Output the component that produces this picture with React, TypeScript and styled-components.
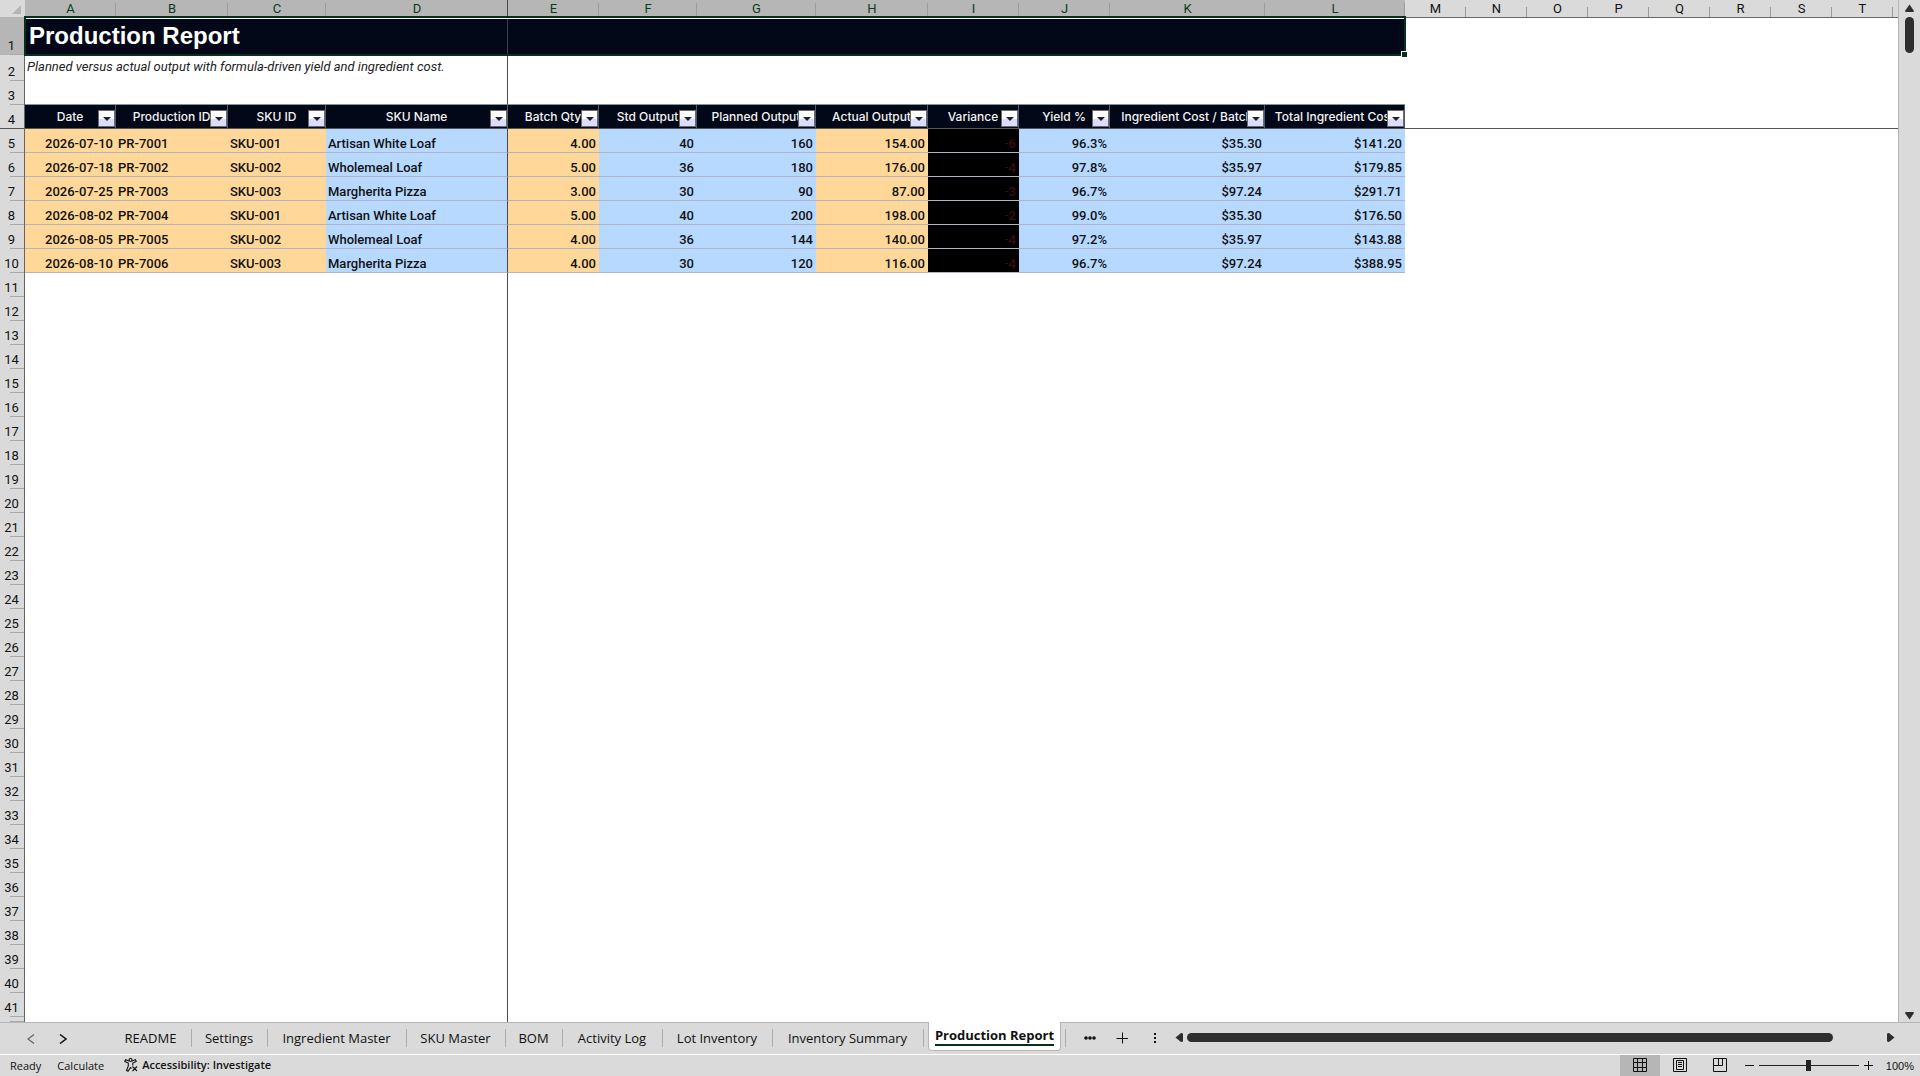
import React from "react";
import styled, { createGlobalStyle, css } from "styled-components";

const sheetFont = '"Roboto", "Liberation Sans", sans-serif';
const uiFont = '"Open Sans", "Noto Sans", sans-serif';

const GlobalStyle = createGlobalStyle`
  *, *::before, *::after { box-sizing: border-box; }
  body { margin: 0; background: #dadada; color: #111; font-family: ${sheetFont}; }
  button, input { font: inherit; color: inherit; }
`;

const Page = styled.div`
  display: flex;
  flex-direction: column;
  height: 100vh;
  min-height: 400px;
  overflow: hidden;
`;

const Workspace = styled.main`
  display: flex;
  flex: 1;
  min-height: 0;
`;

const Viewport = styled.div`
  flex: 1;
  min-width: 0;
  overflow: hidden;
  background: #fff;
  border-right: 1px solid #b6b6b6;
`;

const Sheet = styled.table`
  width: 100%;
  height: 100%;
  table-layout: fixed;
  border-collapse: separate;
  border-spacing: 0;
  font-size: 13px;
  line-height: 16px;
`;

const Col = styled.col<{ $w?: number }>`
  width: ${(p) => (p.$w ? `${p.$w}px` : "auto")};
`;

const Row = styled.tr<{ $h?: number }>`
  height: ${(p) => (p.$h ? `${p.$h}px` : "auto")};
`;

const Corner = styled.th`
  padding: 0;
  background: #dadada;
  border-bottom: 1px solid #b6b6b6;
`;

const SelectAll = styled.button`
  display: flex;
  justify-content: flex-end;
  align-items: flex-end;
  width: 100%;
  height: 17px;
  padding: 0 4px 3px 0;
  border: 0;
  background: none;

  &::before {
    content: "";
    border-left: 9px solid transparent;
    border-bottom: 9px solid #b6b6b6;
  }
`;

const ColumnHead = styled.th<{ $selected: boolean; $freeze?: boolean }>`
  padding: 0;
  text-align: center;
  vertical-align: middle;
  font-weight: 400;
  color: ${(p) => (p.$selected ? "#0b3a1e" : "#111")};
  border-bottom: 1px solid ${(p) => (p.$selected ? "#b6b6b6" : "#666")};
  background:
    linear-gradient(${(p) => (p.$freeze ? "#4a4a4a, #4a4a4a" : "#9c9c9c, #9c9c9c")}) right bottom / 1px ${(p) =>
      p.$freeze ? "17px" : p.$selected ? "14px" : "10px"} no-repeat,
    ${(p) => (p.$selected ? "#b6b6b6" : "#dadada")};
`;

const ColumnHeadRest = styled.td`
  padding: 0;
  background: #dadada;
  border-bottom: 1px solid #666;
`;

const RowHead = styled.th<{ $selected?: boolean; $freeze?: boolean }>`
  padding: 0 1px 1px 0;
  text-align: center;
  vertical-align: bottom;
  font-weight: 400;
  border-right: 1px solid #666;
  background:
    linear-gradient(${(p) => (p.$freeze ? "#555, #555" : "#a8a8a8, #a8a8a8")}) right bottom / ${(p) =>
      p.$freeze ? "100%" : "14px"} 1px no-repeat,
    ${(p) => (p.$selected ? "#b6b6b6" : "#dadada")};
`;

type CellProps = {
  $fill?: string;
  $align?: "left" | "right" | "center";
  $freezeRight?: boolean;
  $freezeBottom?: boolean;
  $aboveFields?: boolean;
  $negative?: boolean;
};

const Cell = styled.td<CellProps>`
  padding: 0 3px 0 2px;
  text-align: ${(p) => p.$align ?? "left"};
  vertical-align: bottom;
  white-space: nowrap;
  font-weight: 500;
  color: ${(p) => (p.$negative ? "#3a0d10" : "#111")};
  background: ${(p) => p.$fill ?? "transparent"};
  ${(p) => p.$fill && css`border-bottom: 1px solid #b3b3c4;`}
  ${(p) => p.$freezeRight && css`border-right: 1px solid #4a4a4a;`}
  ${(p) => p.$freezeBottom && css`border-bottom: 1px solid #555;`}
  ${(p) => p.$aboveFields && css`border-bottom: 1px solid #7d9a94;`}
`;

const TitleCell = styled.td`
  position: relative;
  padding: 0 4px 2px;
  background: #020817;
  color: #fff;
  font-family: "Liberation Sans", Arial, sans-serif;
  font-size: 24px;
  line-height: 28px;
  font-weight: 700;
  vertical-align: middle;
  box-shadow: inset 0 0 0 1px #fff;
`;

const Selection = styled.span`
  position: absolute;
  inset: -2px -1px -1px -1px;
  border: 2px solid #06301a;
  pointer-events: none;

  &::after {
    content: "";
    position: absolute;
    right: -4px;
    bottom: -4px;
    width: 7px;
    height: 7px;
    background: #06301a;
    border: 1px solid #fff;
  }
`;

const FreezeOverTitle = styled.span`
  position: absolute;
  top: 1px;
  bottom: 1px;
  left: 482px;
  width: 1px;
  background: #3c424d;
`;

const NoteCell = styled(Cell)`
  padding-bottom: 2px;
  font-style: italic;
  font-weight: 400;
  color: #222;
  vertical-align: middle;
`;

const FieldHead = styled.th<{ $freezeRight?: boolean }>`
  position: relative;
  padding: 0;
  overflow: hidden;
  white-space: nowrap;
  background: #020817;
  color: #f4f4f4;
  font-family: "Inter", sans-serif;
  font-size: 12px;
  font-weight: 500;
  border-bottom: 1px solid #555;
  border-right: 1px solid ${(p) => (p.$freezeRight ? "#5f5f5f" : "#4d5c6c")};
`;

const FieldName = styled.span`
  display: flex;
  justify-content: center;
`;

const FilterButton = styled.button`
  position: absolute;
  right: 0;
  bottom: 1px;
  display: grid;
  place-items: center;
  width: 17px;
  height: 17px;
  padding: 0;
  border: 1px solid #6b6b6b;
  background: linear-gradient(#fff 50%, #dcdcff 50%);

  &::before {
    content: "";
    border: 4px solid transparent;
    border-top-color: #222;
    border-bottom: 0;
  }
`;

const VerticalScroll = styled.div`
  display: flex;
  flex-direction: column;
  align-items: center;
  justify-content: space-between;
  width: 21px;
  padding: 4px 0 2px;
`;

const ScrollGroup = styled.div`
  display: flex;
  flex-direction: column;
  align-items: center;
  gap: 5px;
`;

const Thumb = styled.div<{ $vertical?: boolean }>`
  ${(p) => (p.$vertical ? "width: 9px; height: 36px;" : "flex: 1; height: 9px;")}
  border-radius: 5px;
  background: #2e2e2e;
`;

const IconButton = styled.button`
  display: grid;
  place-items: center;
  padding: 0;
  border: 0;
  background: none;
`;

const Arrow = styled.svg`
  display: block;
  fill: #2e2e2e;
`;

const TabBar = styled.nav`
  display: flex;
  align-items: stretch;
  height: 32px;
  border-top: 1px solid #b6b6b6;
  font-family: ${uiFont};
  font-size: 13px;
  line-height: 18px;
`;

const Stepper = styled.div`
  display: flex;
  align-items: center;
  gap: 24px;
  width: 111px;
  padding-left: 27px;
`;

const Tab = styled.button<{ $w: number }>`
  width: ${(p) => p.$w}px;
  padding: 0 2px 2px 0;
  border: 0;
  background: linear-gradient(#adadad, #adadad) right 6px / 1px 18px no-repeat;
  white-space: nowrap;
`;

const ActiveTab = styled.button`
  width: 133px;
  height: 29px;
  margin: -1px 0 0 4px;
  padding: 0;
  border: 1px solid #b6b6b6;
  border-top: 0;
  border-radius: 0 0 4px 4px;
  background: #fff;
  font-weight: 700;
  white-space: nowrap;
`;

const Underlined = styled.span`
  display: inline-block;
  border-bottom: 2px solid #06301a;
`;

const TabTools = styled.div`
  display: flex;
  align-items: center;
  gap: 20px;
  padding: 0 13px 2px 23px;
  background: linear-gradient(#adadad, #adadad) 4px 6px / 1px 18px no-repeat;
`;

const HorizontalScroll = styled.div`
  display: flex;
  flex: 1;
  align-items: center;
  gap: 4px;
  padding: 0 25px 2px 0;
`;

const TrackEnd = styled.div`
  width: 46px;
`;

const StatusBar = styled.footer`
  display: flex;
  align-items: stretch;
  height: 22px;
  border-top: 1px solid #fff;
  font-family: ${uiFont};
  font-size: 11px;
  line-height: 16px;
`;

const StatusItems = styled.div`
  display: flex;
  flex: 1;
  align-items: center;
  gap: 16px;
  padding-left: 10px;
`;

const Accessibility = styled.button`
  display: flex;
  align-items: center;
  gap: 4px;
  margin-left: 4px;
  padding: 0 0 2px;
  border: 0;
  background: none;
  font-weight: 600;
`;

const ViewButton = styled(IconButton)<{ $on?: boolean }>`
  width: 40px;
  padding-bottom: 2px;
  background: ${(p) => (p.$on ? "#b6b6b6" : "transparent")};
`;

const ZoomBox = styled.div`
  display: flex;
  align-items: center;
  gap: 5px;
  padding: 0 6px 0 5px;
`;

const ZoomSlider = styled.input`
  appearance: none;
  width: 100px;
  height: 12px;
  margin: 0;
  background: linear-gradient(#222, #222) center / 100% 1px no-repeat;

  &::-webkit-slider-thumb {
    appearance: none;
    width: 5px;
    height: 11px;
    background: #222;
  }
`;

const ZoomValue = styled.button`
  margin-left: 8px;
  padding: 0;
  border: 0;
  background: none;
  font-family: "Liberation Sans", Arial, sans-serif;
  font-size: 11px;
`;

const ORANGE = "#ffd899";
const BLUE = "#b7d9ff";

type Field = { name: string; width: number; fill: string; align: "left" | "right" };

const fields: Field[] = [
  { name: "Date", width: 91, fill: ORANGE, align: "right" },
  { name: "Production ID", width: 112, fill: ORANGE, align: "left" },
  { name: "SKU ID", width: 98, fill: ORANGE, align: "left" },
  { name: "SKU Name", width: 182, fill: BLUE, align: "left" },
  { name: "Batch Qty", width: 91, fill: ORANGE, align: "right" },
  { name: "Std Output", width: 98, fill: BLUE, align: "right" },
  { name: "Planned Output", width: 119, fill: BLUE, align: "right" },
  { name: "Actual Output", width: 112, fill: ORANGE, align: "right" },
  { name: "Variance", width: 91, fill: "#000", align: "right" },
  { name: "Yield %", width: 91, fill: BLUE, align: "right" },
  { name: "Ingredient Cost / Batch", width: 155, fill: BLUE, align: "right" },
  { name: "Total Ingredient Cost", width: 140, fill: BLUE, align: "right" },
];

const records = [
  ["2026-07-10", "PR-7001", "SKU-001", "Artisan White Loaf", "4.00", "40", "160", "154.00", "-6", "96.3%", "$35.30", "$141.20"],
  ["2026-07-18", "PR-7002", "SKU-002", "Wholemeal Loaf", "5.00", "36", "180", "176.00", "-4", "97.8%", "$35.97", "$179.85"],
  ["2026-07-25", "PR-7003", "SKU-003", "Margherita Pizza", "3.00", "30", "90", "87.00", "-3", "96.7%", "$97.24", "$291.71"],
  ["2026-08-02", "PR-7004", "SKU-001", "Artisan White Loaf", "5.00", "40", "200", "198.00", "-2", "99.0%", "$35.30", "$176.50"],
  ["2026-08-05", "PR-7005", "SKU-002", "Wholemeal Loaf", "4.00", "36", "144", "140.00", "-4", "97.2%", "$35.97", "$143.88"],
  ["2026-08-10", "PR-7006", "SKU-003", "Margherita Pizza", "4.00", "30", "120", "116.00", "-4", "96.7%", "$97.24", "$388.95"],
];

const blankColumns = ["M", "N", "O", "P", "Q", "R", "S", "T"];
const letters = [..."ABCDEFGHIJKL", ...blankColumns];
const blankRows = Array.from({ length: 31 }, (_, i) => i + 11);
const FROZEN = 3;

const tabs = [
  { name: "README", width: 81 },
  { name: "Settings", width: 76 },
  { name: "Ingredient Master", width: 139 },
  { name: "SKU Master", width: 99 },
  { name: "BOM", width: 57 },
  { name: "Activity Log", width: 100 },
  { name: "Lot Inventory", width: 110 },
  { name: "Inventory Summary", width: 151 },
];

function BlankCells() {
  return (
    <>
      <Cell colSpan={4} $freezeRight />
      <Cell colSpan={17} />
    </>
  );
}

function Grid() {
  return (
    <Sheet>
      <colgroup>
        <Col $w={25} />
        {fields.map((f) => <Col key={f.name} $w={f.width} />)}
        {blankColumns.map((c) => <Col key={c} $w={61} />)}
        <Col />
      </colgroup>
      <thead>
        <Row $h={18}>
          <Corner><SelectAll aria-label="Select all" /></Corner>
          {letters.map((letter, i) => (
            <ColumnHead key={letter} scope="col" $selected={i < fields.length} $freeze={i === FROZEN}>
              {letter}
            </ColumnHead>
          ))}
          <ColumnHeadRest />
        </Row>
      </thead>
      <tbody>
        <Row $h={37}>
          <RowHead scope="row" $selected>1</RowHead>
          <TitleCell colSpan={12}>
            Production Report
            <FreezeOverTitle />
            <Selection />
          </TitleCell>
          <Cell colSpan={9} />
        </Row>
        <Row $h={26}>
          <RowHead scope="row">2</RowHead>
          <NoteCell colSpan={4} $freezeRight>
            Planned versus actual output with formula-driven yield and ingredient cost.
          </NoteCell>
          <Cell colSpan={17} />
        </Row>
        <Row $h={24}>
          <RowHead scope="row">3</RowHead>
          <Cell colSpan={4} $freezeRight $aboveFields />
          <Cell colSpan={8} $aboveFields />
          <Cell colSpan={9} />
        </Row>
        <Row $h={24}>
          <RowHead scope="row" $freeze>4</RowHead>
          {fields.map((f, i) => (
            <FieldHead key={f.name} scope="col" $freezeRight={i === FROZEN}>
              <FieldName>{f.name}</FieldName>
              <FilterButton aria-label={`Filter ${f.name}`} />
            </FieldHead>
          ))}
          <Cell colSpan={9} $freezeBottom />
        </Row>
        {records.map((record, r) => (
          <Row key={record[1]} $h={24}>
            <RowHead scope="row">{r + 5}</RowHead>
            {record.map((value, i) => (
              <Cell
                key={fields[i].name}
                $fill={fields[i].fill}
                $align={fields[i].align}
                $freezeRight={i === FROZEN}
                $negative={fields[i].name === "Variance"}
              >
                {value}
              </Cell>
            ))}
            <Cell colSpan={9} />
          </Row>
        ))}
        {blankRows.map((n) => (
          <Row key={n} $h={24}>
            <RowHead scope="row">{n}</RowHead>
            <BlankCells />
          </Row>
        ))}
        <Row>
          <RowHead />
          <BlankCells />
        </Row>
      </tbody>
    </Sheet>
  );
}

export default function App() {
  return (
    <Page>
      <GlobalStyle />
      <Workspace>
        <Viewport><Grid /></Viewport>
        <VerticalScroll>
          <ScrollGroup>
            <IconButton aria-label="Scroll up">
              <Arrow width="9" height="8"><path d="M4.5 0.5 L9 7 Q9 8 8 8 H1 Q0 8 0 7 Z" /></Arrow>
            </IconButton>
            <Thumb $vertical />
          </ScrollGroup>
          <IconButton aria-label="Scroll down">
            <Arrow width="9" height="8"><path d="M4.5 7.5 L9 1 Q9 0 8 0 H1 Q0 0 0 1 Z" /></Arrow>
          </IconButton>
        </VerticalScroll>
      </Workspace>
      <TabBar aria-label="Sheets">
        <Stepper>
          <IconButton aria-label="Previous sheets">
            <svg width="8" height="10" fill="none" stroke="#666" strokeWidth="1.3"><path d="M7 0.5 L1 5 L7 9.5" /></svg>
          </IconButton>
          <IconButton aria-label="Next sheets">
            <svg width="8" height="10" fill="none" stroke="#111" strokeWidth="1.5"><path d="M1 0.5 L7 5 L1 9.5" /></svg>
          </IconButton>
        </Stepper>
        {tabs.map((t) => <Tab key={t.name} $w={t.width}>{t.name}</Tab>)}
        <ActiveTab aria-current="page"><Underlined>Production Report</Underlined></ActiveTab>
        <TabTools>
          <IconButton aria-label="More sheets">
            <svg width="12" height="4" fill="#111"><circle cx="2" cy="2" r="1.8" /><circle cx="6" cy="2" r="1.8" /><circle cx="10" cy="2" r="1.8" /></svg>
          </IconButton>
          <IconButton aria-label="New sheet">
            <svg width="12" height="12" stroke="#111"><path d="M6.5 0.5 V11.5 M0.5 6.5 H12" /></svg>
          </IconButton>
          <IconButton aria-label="Resize tabs">
            <svg width="14" height="12" fill="#111"><path d="M6 1h2v2H6zM6 5h2v2H6zM6 9h2v2H6z" /></svg>
          </IconButton>
        </TabTools>
        <HorizontalScroll>
          <IconButton aria-label="Scroll left">
            <Arrow width="8" height="9"><path d="M0.5 4.5 L6 0 Q8 0 8 1 V8 Q8 9 6 9 Z" /></Arrow>
          </IconButton>
          <Thumb />
          <TrackEnd />
          <IconButton aria-label="Scroll right">
            <Arrow width="8" height="9"><path d="M7.5 4.5 L2 0 Q0 0 0 1 V8 Q0 9 2 9 Z" /></Arrow>
          </IconButton>
        </HorizontalScroll>
      </TabBar>
      <StatusBar>
        <StatusItems>
          <span>Ready</span>
          <span>Calculate</span>
          <Accessibility>
            <svg width="14" height="14" fill="none" stroke="#111" strokeWidth="1.1">
              <circle cx="6.5" cy="2" r="1.5" />
              <path d="M5 3 L1.5 1.8 L0.8 3.4 L4.3 5 V8 L2.5 12.5 L4 13.2 L6.5 9.5 L7.5 10.5 M8 3 L11.5 1.8 L12.2 3.4 L8.8 5 V7.5 M8.5 8.5 L13 13 M13 8.5 L8.5 13" />
            </svg>
            Accessibility: Investigate
          </Accessibility>
        </StatusItems>
        <ViewButton $on aria-label="Normal view">
          <svg width="14" height="14" fill="none" stroke="#111"><path d="M0.5 0.5 H13.5 V13.5 H0.5 Z M4.5 0.5 V13.5 M9.5 0.5 V13.5 M0.5 4.5 H13.5 M0.5 9.5 H13.5" /></svg>
        </ViewButton>
        <ViewButton aria-label="Page layout view">
          <svg width="14" height="14" fill="none" stroke="#111"><path d="M0.5 0.5 H13.5 V13.5 H0.5 Z M3.5 2.5 H10.5 V11.5 H3.5 Z M5 4.5 H9 M5 6.5 H9 M5 8.5 H9" /></svg>
        </ViewButton>
        <ViewButton aria-label="Page break preview">
          <svg width="14" height="14" fill="none" stroke="#111"><path d="M0.5 0.5 H13.5 V13.5 H0.5 Z M5.5 0.5 V7.5 M0.5 7.5 H9.5 V0.5" /></svg>
        </ViewButton>
        <ZoomBox>
          <IconButton aria-label="Zoom out"><svg width="9" height="9" stroke="#111"><path d="M0 4.5 H9" /></svg></IconButton>
          <ZoomSlider type="range" min="10" max="190" defaultValue="100" aria-label="Zoom" />
          <IconButton aria-label="Zoom in"><svg width="9" height="9" stroke="#111"><path d="M0 4.5 H9 M4.5 0 V9" /></svg></IconButton>
          <ZoomValue>100%</ZoomValue>
        </ZoomBox>
      </StatusBar>
    </Page>
  );
}
